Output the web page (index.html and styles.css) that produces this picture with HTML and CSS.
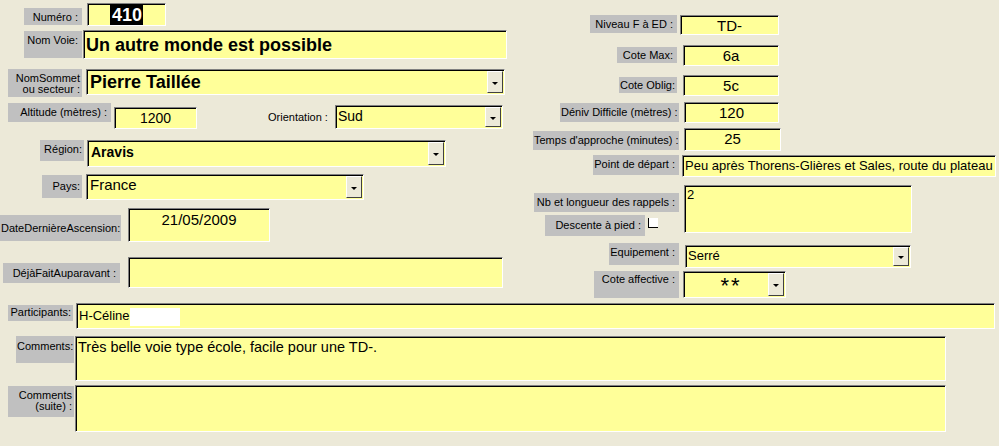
FILE: index.html
```html
<!DOCTYPE html>
<html lang="fr">
<head>
    <meta charset="UTF-8">
    <title>Voie 410</title>
    <link rel="stylesheet" href="styles.css">
</head>
<body>
<form class="sheet">
    <div class="top">
        <div class="col-left">
            <div class="row r-numero">
                <div class="lbl l-numero">Numéro :</div>
                <div class="fld f-numero"><span class="sel">410</span></div>
            </div>
            <div class="row r-voie">
                <div class="lbl l-voie">Nom Voie:</div>
                <div class="fld f-voie">Un autre monde est possible</div>
            </div>
            <div class="row r-sommet">
                <div class="lbl two l-sommet">NomSommet<br>ou secteur :</div>
                <div class="fld combo f-sommet"><span class="txt">Pierre Taillée</span><span class="drop"></span></div>
            </div>
            <div class="row r-alt">
                <div class="lbl l-alt">Altitude (mètres) :</div>
                <div class="fld f-alt">1200</div>
                <div class="plain l-orient">Orientation :</div>
                <div class="fld combo f-orient"><span class="txt">Sud</span><span class="drop"></span></div>
            </div>
            <div class="row r-region">
                <div class="lbl l-region">Région:</div>
                <div class="fld combo f-region"><span class="txt">Aravis</span><span class="drop"></span></div>
            </div>
            <div class="row r-pays">
                <div class="lbl l-pays">Pays:</div>
                <div class="fld combo f-pays"><span class="txt">France</span><span class="drop"></span></div>
            </div>
            <div class="row r-date">
                <div class="lbl l-date">DateDernièreAscension:</div>
                <div class="fld f-date">21/05/2009</div>
            </div>
            <div class="row r-deja">
                <div class="lbl l-deja">DéjàFaitAuparavant :</div>
                <div class="fld f-deja"></div>
            </div>
        </div>

        <div class="col-right">
            <div class="rrow r-niveau">
                <div class="cell"><div class="lbl l-niveau">Niveau F à ED :</div></div>
                <div class="fld f-niveau">TD-</div>
            </div>
            <div class="rrow r-max">
                <div class="cell"><div class="lbl l-max">Cote Max:</div></div>
                <div class="fld f-max">6a</div>
            </div>
            <div class="rrow r-oblig">
                <div class="cell"><div class="lbl l-oblig">Cote Oblig:</div></div>
                <div class="fld f-oblig">5c</div>
            </div>
            <div class="rrow r-deniv">
                <div class="cell"><div class="lbl l-deniv">Déniv Difficile (mètres) :</div></div>
                <div class="fld f-deniv">120</div>
            </div>
            <div class="rrow r-temps">
                <div class="cell"><div class="lbl l-temps">Temps d'approche (minutes) :</div></div>
                <div class="fld f-temps">25</div>
            </div>
            <div class="rrow r-depart">
                <div class="cell"><div class="lbl l-depart">Point de départ :</div></div>
                <div class="fld f-depart">Peu après Thorens-Glières et Sales, route du plateau</div>
            </div>
            <div class="rrow r-rappels">
                <div class="cell stack">
                    <div class="lbl l-rappels">Nb et longueur des rappels :</div>
                    <div class="descente">
                        <div class="lbl l-descente">Descente à pied :</div>
                        <span class="check"></span>
                    </div>
                </div>
                <div class="fld f-rappels">2</div>
            </div>
            <div class="rrow r-equip">
                <div class="cell"><div class="lbl l-equip">Equipement :</div></div>
                <div class="fld combo f-equip"><span class="txt">Serré</span><span class="drop"></span></div>
            </div>
            <div class="rrow r-affect">
                <div class="cell"><div class="lbl l-affect">Cote affective :</div></div>
                <div class="fld combo f-affect"><span class="txt stars">**</span><span class="drop"></span></div>
            </div>
        </div>
    </div>

    <div class="row r-part">
        <div class="lbl l-part">Participants:</div>
        <div class="fld f-part">H-Céline<span class="sub"></span></div>
    </div>
    <div class="row r-comm">
        <div class="lbl l-comm">Comments:</div>
        <div class="fld f-comm">Très belle voie type école, facile pour une TD-.</div>
    </div>
    <div class="row r-suite">
        <div class="lbl two l-suite">Comments<br>(suite) :</div>
        <div class="fld f-suite"></div>
    </div>
</form>
</body>
</html>
```

FILE: styles.css
```css
* {
    box-sizing: border-box;
}
body {
    margin: 0;
    background-color: #ece9d8;
    font-family: "Liberation Sans", Arial, sans-serif;
    color: #000;
}
.sheet {
    width: 999px;
    height: 446px;
}

/* common controls */
.row, .rrow {
    display: flex;
    align-items: flex-start;
}
.lbl {
    flex: none;
    background-color: #c0c0c0;
    font-size: 11px;
    line-height: 13px;
    text-align: right;
    padding: 2px 4px 0 1px;
    white-space: nowrap;
}
.lbl.two {
    line-height: 11px;
    padding-top: 4px;
}
.plain {
    flex: none;
    font-size: 11px;
    line-height: 13px;
    white-space: nowrap;
}
.fld {
    flex: none;
    background-color: #ffff99;
    border: 1px solid;
    border-color: #808080 #fff #fff #808080;
    box-shadow: inset 1px 1px 0 #000;
    font-size: 13px;
    line-height: 18px;
    padding: 1px 2px 0 2px;
    white-space: nowrap;
    overflow: hidden;
}
.combo {
    display: flex;
    padding-right: 1px;
    padding-bottom: 1px;
}
.combo .txt {
    flex: 1;
}
.drop {
    flex: none;
    width: 16px;
    align-self: stretch;
    background-color: #ece9d8;
    border: 1px solid;
    border-color: #fff #404040 #404040 #fff;
    display: flex;
    align-items: center;
    justify-content: center;
}
.drop::after {
    content: "";
    border-left: 3px solid transparent;
    border-right: 3px solid transparent;
    border-top: 3px solid #000;
    margin-top: 2px;
}

/* layout */
.top {
    display: flex;
    height: 295px;
}
.col-left {
    width: 520px;
    display: flex;
    flex-direction: column;
}
.col-right {
    flex: 1;
    display: flex;
    flex-direction: column;
}
.cell {
    width: 159px;
    display: flex;
    justify-content: flex-end;
}

/* left column */
.r-numero { margin-top: 3px; padding-left: 24px; }
.l-numero { width: 58px; height: 17px; margin-top: 5px; padding-top: 3px; }
.f-numero { width: 79px; height: 23px; margin-left: 5px; text-align: center; font-size: 18px; font-weight: bold; line-height: 20px; padding-top: 1px; }
.sel { background-color: #000; color: #fff; padding: 1px 1px 0 2px; }

.r-voie { margin-top: 4px; padding-left: 24px; }
.l-voie { width: 58px; height: 27px; margin-top: 1px; padding-top: 3px; }
.f-voie { width: 424px; height: 29px; margin-left: 1px; font-size: 18px; font-weight: bold; line-height: 26px; }

.r-sommet { margin-top: 10px; padding-left: 8px; }
.l-sommet { width: 74px; height: 28px; padding-top: 3px; padding-right: 2px; }
.f-sommet { width: 419px; height: 26px; margin-left: 4px; font-size: 18px; font-weight: bold; line-height: 23px; padding-left: 3px; }

.r-alt { margin-top: 6px; padding-left: 8px; }
.l-alt { width: 103px; height: 19px; padding-top: 3px; }
.f-alt { width: 83px; height: 22px; margin-left: 3px; margin-top: 4px; text-align: center; font-size: 14px; }
.l-orient { margin-left: 71px; margin-top: 8px; }
.f-orient { width: 168px; height: 24px; margin-left: 7px; margin-top: 2px; font-size: 14px; line-height: 19px; }

.r-region { margin-top: 11px; padding-left: 40px; }
.l-region { width: 44px; height: 21px; padding-top: 3px; padding-right: 2px; }
.f-region { width: 359px; height: 27px; margin-left: 3px; font-size: 14px; font-weight: bold; line-height: 20px; padding-left: 3px; }

.r-pays { margin-top: 7px; padding-left: 42px; }
.l-pays { width: 40px; height: 23px; margin-top: 1px; padding-top: 5px; padding-right: 2px; }
.f-pays { width: 278px; height: 26px; margin-left: 4px; font-size: 15px; line-height: 17px; padding-left: 3px; }

.r-date { margin-top: 8px; }
.l-date { width: 121px; height: 26px; margin-top: 7px; padding-top: 7px; padding-right: 2px; }
.f-date { width: 142px; height: 34px; margin-left: 7px; text-align: center; font-size: 15px; line-height: 20px; }

.r-deja { margin-top: 15px; padding-left: 3px; }
.l-deja { width: 117px; height: 20px; margin-top: 6px; padding-top: 4px; }
.f-deja { width: 375px; height: 31px; margin-left: 8px; }

/* right column */
.r-niveau { margin-top: 15px; }
.l-niveau { width: 87px; height: 18px; margin-right: 2px; padding-top: 3px; }
.f-niveau { width: 99px; height: 20px; margin-left: 1px; text-align: center; font-size: 15px; line-height: 17px; }

.r-max { margin-top: 10px; }
.l-max { width: 60px; height: 16px; margin-top: 2px; margin-right: 2px; }
.f-max { width: 96px; height: 21px; margin-left: 4px; text-align: center; font-size: 15px; }

.r-oblig { margin-top: 9px; }
.l-oblig { width: 58px; height: 16px; margin-top: 2px; margin-right: 2px; }
.f-oblig { width: 96px; height: 21px; margin-left: 4px; text-align: center; font-size: 15px; }

.r-deniv { margin-top: 6px; }
.l-deniv { width: 119px; height: 19px; margin-top: 1px; padding-top: 3px; }
.f-deniv { width: 95px; height: 21px; margin-left: 5px; text-align: center; font-size: 15px; }

.r-temps { margin-top: 5px; }
.l-temps { width: 146px; height: 19px; margin-top: 3px; padding-top: 3px; }
.f-temps { width: 97px; height: 23px; margin-left: 5px; text-align: center; font-size: 15px; line-height: 17px; }

.r-depart { margin-top: 4px; }
.l-depart { width: 86px; height: 20px; padding-top: 3px; }
.f-depart { width: 314px; height: 22px; margin-left: 3px; line-height: 17px; padding-top: 1px; }

.r-rappels { margin-top: 8px; }
.stack {
    flex-direction: column;
    align-items: flex-end;
}
.l-rappels { width: 145px; height: 19px; margin-top: 8px; padding-top: 3px; }
.descente {
    display: flex;
    align-items: flex-start;
    margin-top: 3px;
    margin-right: 21px;
}
.l-descente { width: 100px; height: 21px; padding-top: 4px; }
.check {
    width: 10px;
    height: 10px;
    margin-left: 3px;
    margin-top: 3px;
    background-color: #fff;
    border-left: 1px solid #000;
    border-bottom: 1px solid #000;
}
.f-rappels { width: 228px; height: 48px; margin-left: 5px; line-height: 16px; }

.r-equip { margin-top: 7px; }
.l-equip { width: 70px; height: 22px; padding-top: 3px; }
.f-equip { width: 226px; height: 23px; margin-left: 6px; margin-top: 2px; line-height: 17px; }

.r-affect { margin-top: 3px; }
.l-affect { width: 85px; height: 27px; padding-top: 2px; }
.f-affect { width: 103px; height: 27px; margin-left: 4px; }
.stars {
    text-align: center;
    font-size: 22px;
    line-height: 26px;
    letter-spacing: 2px;
    padding-left: 8px;
}

/* bottom rows */
.r-part { margin-top: 8px; padding-left: 8px; }
.l-part { width: 65px; height: 16px; margin-top: 2px; padding-top: 1px; padding-right: 2px; }
.f-part { width: 919px; height: 26px; margin-left: 3px; display: flex; align-items: flex-start; line-height: 18px; padding-top: 3px; }
.sub {
    width: 50px;
    height: 18px;
    margin-top: 1px;
    background-color: #fff;
}

.r-comm { margin-top: 7px; padding-left: 16px; }
.l-comm { width: 58px; height: 27px; padding-top: 4px; padding-right: 1px; }
.f-comm { width: 871px; height: 45px; margin-left: 1px; font-size: 14.5px; line-height: 19px; }

.r-suite { margin-top: 4px; padding-left: 8px; }
.l-suite { width: 66px; height: 31px; margin-top: 1px; padding-right: 2px; }
.f-suite { width: 871px; height: 47px; margin-left: 1px; }
```
